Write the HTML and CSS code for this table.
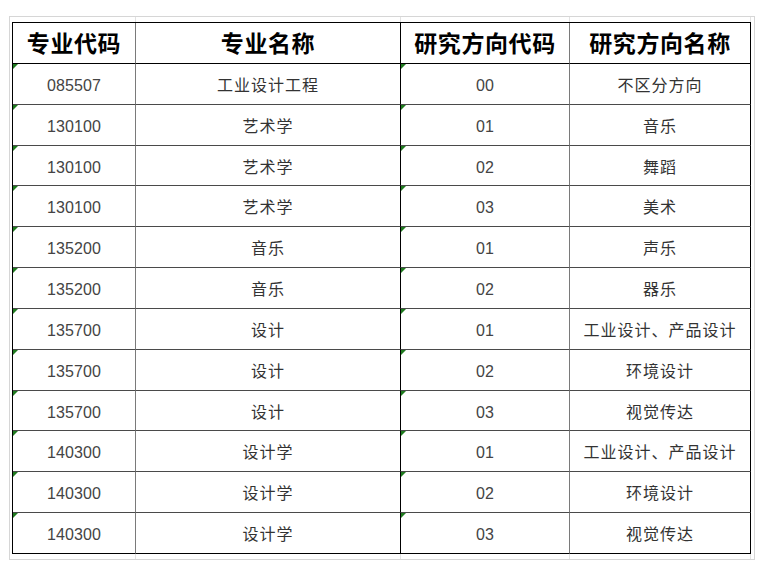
FILE: index.html
```html
<!DOCTYPE html>
<html lang="zh-CN">
<head>
<meta charset="utf-8">
<title>专业目录</title>
<link rel="stylesheet" href="styles.css">
</head>
<body>
<div class="sheet">
  <div class="strip"><span class="s1"></span><span class="s2"></span><span class="s3"></span><span class="s4"></span></div>
  <div class="grid">
    <div class="cell head c1">专业代码</div>
    <div class="cell head c2">专业名称</div>
    <div class="cell head c3">研究方向代码</div>
    <div class="cell head c4">研究方向名称</div>

    <div class="cell num c1 mark">085507</div><div class="cell name c2">工业设计工程</div><div class="cell num c3 mark">00</div><div class="cell name c4">不区分方向</div>
    <div class="cell num c1 mark">130100</div><div class="cell name c2">艺术学</div><div class="cell num c3 mark">01</div><div class="cell name c4">音乐</div>
    <div class="cell num c1 mark">130100</div><div class="cell name c2">艺术学</div><div class="cell num c3 mark">02</div><div class="cell name c4">舞蹈</div>
    <div class="cell num c1 mark">130100</div><div class="cell name c2">艺术学</div><div class="cell num c3 mark">03</div><div class="cell name c4">美术</div>
    <div class="cell num c1 mark">135200</div><div class="cell name c2">音乐</div><div class="cell num c3 mark">01</div><div class="cell name c4">声乐</div>
    <div class="cell num c1 mark">135200</div><div class="cell name c2">音乐</div><div class="cell num c3 mark">02</div><div class="cell name c4">器乐</div>
    <div class="cell num c1 mark">135700</div><div class="cell name c2">设计</div><div class="cell num c3 mark">01</div><div class="cell name c4">工业设计、产品设计</div>
    <div class="cell num c1 mark">135700</div><div class="cell name c2">设计</div><div class="cell num c3 mark">02</div><div class="cell name c4">环境设计</div>
    <div class="cell num c1 mark">135700</div><div class="cell name c2">设计</div><div class="cell num c3 mark">03</div><div class="cell name c4">视觉传达</div>
    <div class="cell num c1 mark">140300</div><div class="cell name c2">设计学</div><div class="cell num c3 mark">01</div><div class="cell name c4">工业设计、产品设计</div>
    <div class="cell num c1 mark">140300</div><div class="cell name c2">设计学</div><div class="cell num c3 mark">02</div><div class="cell name c4">环境设计</div>
    <div class="cell num c1 mark">140300</div><div class="cell name c2">设计学</div><div class="cell num c3 mark">03</div><div class="cell name c4">视觉传达</div>
  </div>
  <div class="strip"><span class="s1"></span><span class="s2"></span><span class="s3"></span><span class="s4"></span></div>
</div>
</body>
</html>
```
FILE: styles.css
```css
* { box-sizing: border-box; }
html, body { margin: 0; padding: 0; background: #fff; }
body {
  font-family: "Liberation Sans", "Noto Sans CJK SC", sans-serif;
  width: 759px;
  height: 562px;
  overflow: hidden;
}
.sheet {
  margin: 16px 0 0 9px;
  width: 746px;
  border: 1px solid #d6d6d6;
}
.strip {
  display: flex;
  height: 5px;
}
.strip span {
  display: block;
  height: 100%;
  border-right: 1px solid #e2e2e2;
}
.strip .s1 { width: 126px; }
.strip .s2 { width: 265px; }
.strip .s3 { width: 169px; }
.strip .s4 { width: 181px; }
.grid {
  margin: 0 3px 0 2px;
  width: 739px;
  display: grid;
  grid-template-columns: 123px 265px 169px 181px;
  grid-template-rows: 41px repeat(12, 40.834px);
  border-left: 1px solid #000;
  border-top: 1px solid #000;
}
.cell {
  position: relative;
  display: flex;
  align-items: center;
  justify-content: center;
  border-bottom: 1px solid #4a4a4a;
  border-right: 1px solid #000;
  color: #333;
  font-size: 16px;
}
.cell.c1, .cell.c3 { border-right-color: #7a7a7a; }
.cell.c2, .cell.c4 { border-right-color: #000; }
.head {
  border-bottom-color: #000;
  color: #000;
  font-weight: 700;
  font-size: 23px;
  letter-spacing: 0.6px;
  padding-bottom: 2px;
}
.name { letter-spacing: 1px; }
.num {
  color: #444;
  letter-spacing: 0.1px;
  padding-top: 4px;
}
.grid > .cell:nth-last-child(-n+4) { border-bottom-color: #000; }
.mark::before {
  content: "";
  position: absolute;
  top: 0;
  left: 0;
  width: 0;
  height: 0;
  border-top: 5px solid #1f7a1f;
  border-right: 5px solid transparent;
}
```
